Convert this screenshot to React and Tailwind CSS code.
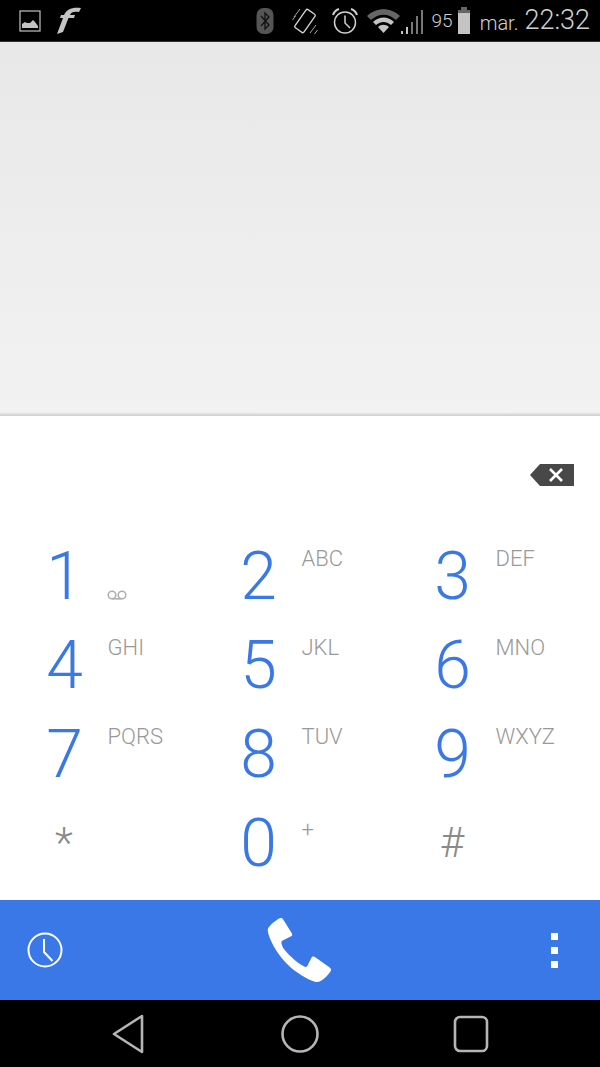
const KEYS = [
  ["1", null],
  ["2", "ABC"],
  ["3", "DEF"],
  ["4", "GHI"],
  ["5", "JKL"],
  ["6", "MNO"],
  ["7", "PQRS"],
  ["8", "TUV"],
  ["9", "WXYZ"],
  ["*", null],
  ["0", "+"],
  ["#", null],
];

function StatusBar() {
  return (
    <div className="h-[42px] bg-black border-b border-[#333] flex items-center pl-[19px] pr-[10px] text-[#d0d0d0]">
      <svg width="22" height="22" viewBox="0 0 22 22" className="text-[#c4c4c4]">
        <rect x="1" y="1" width="20" height="20" fill="none" stroke="currentColor" strokeWidth="1.2" />
        <path d="M3 18v-4l3-2 2 1 3 0 3-3 2 2 3 4v2z" fill="currentColor" />
      </svg>
      <svg width="26" height="28" viewBox="0 0 26 28" className="ml-[15px]">
        <path d="M1 27 L7 11 H4 L5 8 H8 C11 2 16 0 25 1 L23 5 C18 4 15 5 14 8 H19 L18 11 H12.5 L7 25 Z" fill="#c4c4c4" />
      </svg>
      <div className="flex-1" />
      <svg width="18" height="28" viewBox="0 0 18 28">
        <rect x="0.5" y="1" width="17" height="26" rx="7" fill="#555" />
        <path d="M5 9 L13 18 L9 22 V6 L13 10 L5 19" fill="none" stroke="#111" strokeWidth="1.3" />
      </svg>
      <svg width="26" height="28" viewBox="0 0 26 28" className="ml-[18px]" fill="none" stroke="#d0d0d0">
        <rect x="7.5" y="3" width="11" height="22" rx="1.5" strokeWidth="1.4" transform="rotate(35 13 14)" />
        <path d="M2 10 L8 2 M24 18 L18 26 M0.5 13 L3.5 9 M22.5 27 L25.5 23" strokeWidth="0.8" />
      </svg>
      <svg width="28" height="28" viewBox="0 0 28 28" className="ml-[13px]" fill="none" stroke="#d0d0d0" strokeWidth="1.5">
        <circle cx="14" cy="15.5" r="10.5" />
        <path d="M14 8.5 V16 L19 21" />
        <path d="M2 8 C3 5 5 3 8 2 M26 8 C25 5 23 3 20 2" strokeWidth="2" />
      </svg>
      <svg width="34" height="26" viewBox="0 0 34 26" className="ml-[8px]">
        <path d="M0 8 C9 -1 24 -1 33 8 L29 12 C21 5 12 5 4 12 Z" fill="#666" />
        <path d="M6 14 C12 8 21 8 27 14 L24 17 C19 13 14 13 9 17 Z" fill="#c4c4c4" />
        <path d="M11 19 C14 16 19 16 22 19 L16.5 25 Z" fill="#c4c4c4" />
      </svg>
      <svg width="24" height="28" viewBox="0 0 24 28" className="ml-[-1px]">
        <rect x="1" y="24" width="2" height="3" fill="#c4c4c4" />
        <rect x="6" y="20" width="2" height="7" fill="#c4c4c4" />
        <rect x="11" y="15" width="2" height="12" fill="#777" />
        <rect x="16" y="9" width="2" height="18" fill="#777" />
        <rect x="21" y="3" width="2" height="24" fill="#777" />
      </svg>
      <span className="ml-[8px] text-[19px] leading-none font-['Roboto',sans-serif] font-light">95</span>
      <svg width="14" height="28" viewBox="0 0 14 28" className="ml-[4px]">
        <rect x="4" y="0" width="6" height="3" fill="#666" />
        <rect x="1" y="3" width="12" height="3" fill="#666" />
        <rect x="1" y="6" width="12" height="21" fill="#c4c4c4" />
      </svg>
      <span className="ml-[9px] mt-[4px] text-[20px] leading-none font-['Roboto',sans-serif] font-light">mar.</span>
      <span className="ml-[6px] text-[27px] leading-none font-['Roboto',sans-serif] font-light">22:32</span>
    </div>
  );
}

function Key({ digit, letters }) {
  const isSymbol = digit === "*" || digit === "#";
  return (
    <div className="relative h-[89px] pl-[32px] flex items-center">
      <span
        className={`w-[64px] text-center font-['Roboto',sans-serif] font-light leading-none ${
          isSymbol ? "text-[42px] text-[#8a8a8a]" : "ml-[0.5px] mt-[2px] text-[66px] text-[#3b78e7]"
        }`}
      >
        {digit}
      </span>
      {letters && (
        <span
          className={`absolute left-[107.5px] text-[22px] leading-[28px] text-[#999] font-['Roboto',sans-serif] font-light ${
            letters === "+" ? "top-[18px]" : "top-[14px]"
          }`}
        >
          {letters}
        </span>
      )}
      {digit === "1" && (
        <svg width="20" height="10" viewBox="0 0 20 10" className="absolute left-[107px] top-[59px]" fill="none" stroke="#b0b0b0" strokeWidth="1.6">
          <circle cx="5" cy="5" r="3.8" />
          <circle cx="15" cy="5" r="3.8" />
          <path d="M5 8.8 H15" />
        </svg>
      )}
    </div>
  );
}

export default function App() {
  return (
    <div className="w-[600px] h-[1067px] flex flex-col overflow-hidden bg-white font-['Roboto',sans-serif]">
      <StatusBar />

      {/* empty number display */}
      <div className="h-[374px] bg-gradient-to-b from-[#e8e8e8] to-[#f2f2f2] flex flex-col justify-end">
        <div className="h-[3px] bg-gradient-to-b from-[#e6e6e6] to-[#cfcfcf]" />
      </div>

      {/* dialpad */}
      <div className="h-[484px] bg-white flex flex-col">
        <div className="h-[115px] flex justify-end pt-[48px] pr-[26px]">
          <svg width="44" height="22" viewBox="0 0 44 22">
            <path d="M10 0 H44 V22 H10 L0 11 Z" fill="#484848" />
            <path d="M20 5 L32 17 M32 5 L20 17" stroke="#fff" strokeWidth="2.6" />
          </svg>
        </div>
        <div className="grid grid-cols-[194px_194px_212px]">
          {KEYS.map(([digit, letters]) => (
            <Key key={digit} digit={digit} letters={letters} />
          ))}
        </div>
      </div>

      {/* call bar */}
      <div className="h-[100px] bg-[#3b78e7] flex items-center justify-between pl-[27px] pr-[42px]">
        <svg width="36" height="36" viewBox="0 0 36 36" fill="none" stroke="#fff" strokeWidth="2">
          <circle cx="18" cy="18" r="16.5" />
          <path d="M17 7 V20 L25.5 29" />
        </svg>
        <svg width="65" height="66" viewBox="0 0 66 74" preserveAspectRatio="none" className="mr-[15px] mb-[1px]" fill="#fff">
          <path d="M14 1 C12 1 3 8 1 13 C0 17 3 25 7 33 C13 45 22 56 32 63 C40 69 48 73 51 73 C55 73 62 66 65 60 C65 59 65 58 64 57 L49 45 C47 44 46 44 45 46 L41 55 C40 56 39 57 37 55 C30 51 20 41 16 34 C15 31 14 28 15 27 L24 22 C26 21 26 20 25 18 L16 2 C15 1 15 1 14 1 Z" />
        </svg>
        <div className="flex flex-col gap-[7px]">
          <div className="w-[7px] h-[7px] bg-white" />
          <div className="w-[7px] h-[7px] bg-white" />
          <div className="w-[7px] h-[7px] bg-white" />
        </div>
      </div>

      {/* nav bar */}
      <div className="flex-1 bg-black flex items-center justify-between pl-[112px] pr-[111px]">
        <svg width="32" height="40" viewBox="0 0 32 40" fill="none" stroke="#b5b5b5" strokeWidth="2.6" strokeLinejoin="round">
          <path d="M30 2 V38 L2 20 Z" />
        </svg>
        <svg width="38" height="40" viewBox="0 0 38 40" fill="none" stroke="#b5b5b5" strokeWidth="2.6" className="ml-[2px]">
          <circle cx="19" cy="20" r="17.5" />
        </svg>
        <svg width="36" height="38" viewBox="0 0 36 38" fill="none" stroke="#b5b5b5" strokeWidth="2.6">
          <rect x="2" y="2" width="32" height="34" rx="5" />
        </svg>
      </div>
    </div>
  );
}
